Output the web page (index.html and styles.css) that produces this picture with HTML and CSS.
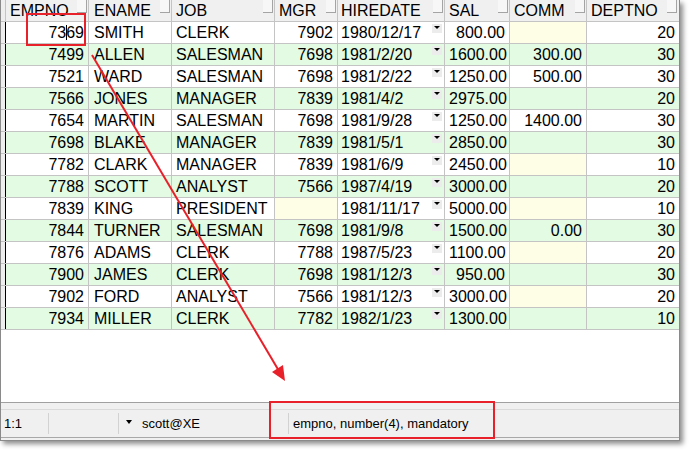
FILE: index.html
```html
<!DOCTYPE html>
<html>
<head>
<meta charset="utf-8">
<link rel="stylesheet" href="styles.css">
</head>
<body>
<div class="page">
  <div class="window">
    <div class="grid">
      <div class="row hdr">
        <div class="cell ind hind"></div>
        <div class="cell c1 hc"><span>EMPNO</span><i class="hb"></i></div>
        <div class="cell c2 hc"><span>ENAME</span><i class="hb"></i></div>
        <div class="cell c3 hc"><span>JOB</span><i class="hb"></i></div>
        <div class="cell c4 hc"><span>MGR</span><i class="hb"></i></div>
        <div class="cell c5 hc"><span>HIREDATE</span><i class="hb"></i></div>
        <div class="cell c6 hc"><span>SAL</span><i class="hb"></i></div>
        <div class="cell c7 hc"><span>COMM</span><i class="hb"></i></div>
        <div class="cell c8 hc"><span>DEPTNO</span><i class="hb"></i></div>
      </div>

      <div class="row">
        <div class="cell ind"></div>
        <div class="cell c1 n">73<span class="caret"></span>69</div>
        <div class="cell c2">SMITH</div>
        <div class="cell c3">CLERK</div>
        <div class="cell c4 n">7902</div>
        <div class="cell c5 dt"><span>1980/12/17</span><i class="dd"></i></div>
        <div class="cell c6 n">800.00</div>
        <div class="cell c7 n nul"></div>
        <div class="cell c8 n">20</div>
      </div>
      <div class="row alt">
        <div class="cell ind"></div>
        <div class="cell c1 n">7499</div>
        <div class="cell c2">ALLEN</div>
        <div class="cell c3">SALESMAN</div>
        <div class="cell c4 n">7698</div>
        <div class="cell c5 dt"><span>1981/2/20</span><i class="dd"></i></div>
        <div class="cell c6 n">1600.00</div>
        <div class="cell c7 n">300.00</div>
        <div class="cell c8 n">30</div>
      </div>
      <div class="row">
        <div class="cell ind"></div>
        <div class="cell c1 n">7521</div>
        <div class="cell c2">WARD</div>
        <div class="cell c3">SALESMAN</div>
        <div class="cell c4 n">7698</div>
        <div class="cell c5 dt"><span>1981/2/22</span><i class="dd"></i></div>
        <div class="cell c6 n">1250.00</div>
        <div class="cell c7 n">500.00</div>
        <div class="cell c8 n">30</div>
      </div>
      <div class="row alt">
        <div class="cell ind"></div>
        <div class="cell c1 n">7566</div>
        <div class="cell c2">JONES</div>
        <div class="cell c3">MANAGER</div>
        <div class="cell c4 n">7839</div>
        <div class="cell c5 dt"><span>1981/4/2</span><i class="dd"></i></div>
        <div class="cell c6 n">2975.00</div>
        <div class="cell c7 n nul"></div>
        <div class="cell c8 n">20</div>
      </div>
      <div class="row">
        <div class="cell ind"></div>
        <div class="cell c1 n">7654</div>
        <div class="cell c2">MARTIN</div>
        <div class="cell c3">SALESMAN</div>
        <div class="cell c4 n">7698</div>
        <div class="cell c5 dt"><span>1981/9/28</span><i class="dd"></i></div>
        <div class="cell c6 n">1250.00</div>
        <div class="cell c7 n">1400.00</div>
        <div class="cell c8 n">30</div>
      </div>
      <div class="row alt">
        <div class="cell ind"></div>
        <div class="cell c1 n">7698</div>
        <div class="cell c2">BLAKE</div>
        <div class="cell c3">MANAGER</div>
        <div class="cell c4 n">7839</div>
        <div class="cell c5 dt"><span>1981/5/1</span><i class="dd"></i></div>
        <div class="cell c6 n">2850.00</div>
        <div class="cell c7 n nul"></div>
        <div class="cell c8 n">30</div>
      </div>
      <div class="row">
        <div class="cell ind"></div>
        <div class="cell c1 n">7782</div>
        <div class="cell c2">CLARK</div>
        <div class="cell c3">MANAGER</div>
        <div class="cell c4 n">7839</div>
        <div class="cell c5 dt"><span>1981/6/9</span><i class="dd"></i></div>
        <div class="cell c6 n">2450.00</div>
        <div class="cell c7 n nul"></div>
        <div class="cell c8 n">10</div>
      </div>
      <div class="row alt">
        <div class="cell ind"></div>
        <div class="cell c1 n">7788</div>
        <div class="cell c2">SCOTT</div>
        <div class="cell c3">ANALYST</div>
        <div class="cell c4 n">7566</div>
        <div class="cell c5 dt"><span>1987/4/19</span><i class="dd"></i></div>
        <div class="cell c6 n">3000.00</div>
        <div class="cell c7 n nul"></div>
        <div class="cell c8 n">20</div>
      </div>
      <div class="row">
        <div class="cell ind"></div>
        <div class="cell c1 n">7839</div>
        <div class="cell c2">KING</div>
        <div class="cell c3">PRESIDENT</div>
        <div class="cell c4 n nul"></div>
        <div class="cell c5 dt"><span>1981/11/17</span><i class="dd"></i></div>
        <div class="cell c6 n">5000.00</div>
        <div class="cell c7 n nul"></div>
        <div class="cell c8 n">10</div>
      </div>
      <div class="row alt">
        <div class="cell ind"></div>
        <div class="cell c1 n">7844</div>
        <div class="cell c2">TURNER</div>
        <div class="cell c3">SALESMAN</div>
        <div class="cell c4 n">7698</div>
        <div class="cell c5 dt"><span>1981/9/8</span><i class="dd"></i></div>
        <div class="cell c6 n">1500.00</div>
        <div class="cell c7 n">0.00</div>
        <div class="cell c8 n">30</div>
      </div>
      <div class="row">
        <div class="cell ind"></div>
        <div class="cell c1 n">7876</div>
        <div class="cell c2">ADAMS</div>
        <div class="cell c3">CLERK</div>
        <div class="cell c4 n">7788</div>
        <div class="cell c5 dt"><span>1987/5/23</span><i class="dd"></i></div>
        <div class="cell c6 n">1100.00</div>
        <div class="cell c7 n nul"></div>
        <div class="cell c8 n">20</div>
      </div>
      <div class="row alt">
        <div class="cell ind"></div>
        <div class="cell c1 n">7900</div>
        <div class="cell c2">JAMES</div>
        <div class="cell c3">CLERK</div>
        <div class="cell c4 n">7698</div>
        <div class="cell c5 dt"><span>1981/12/3</span><i class="dd"></i></div>
        <div class="cell c6 n">950.00</div>
        <div class="cell c7 n nul"></div>
        <div class="cell c8 n">30</div>
      </div>
      <div class="row">
        <div class="cell ind"></div>
        <div class="cell c1 n">7902</div>
        <div class="cell c2">FORD</div>
        <div class="cell c3">ANALYST</div>
        <div class="cell c4 n">7566</div>
        <div class="cell c5 dt"><span>1981/12/3</span><i class="dd"></i></div>
        <div class="cell c6 n">3000.00</div>
        <div class="cell c7 n nul"></div>
        <div class="cell c8 n">20</div>
      </div>
      <div class="row alt">
        <div class="cell ind"></div>
        <div class="cell c1 n">7934</div>
        <div class="cell c2">MILLER</div>
        <div class="cell c3">CLERK</div>
        <div class="cell c4 n">7782</div>
        <div class="cell c5 dt"><span>1982/1/23</span><i class="dd"></i></div>
        <div class="cell c6 n">1300.00</div>
        <div class="cell c7 n nul"></div>
        <div class="cell c8 n">10</div>
      </div>
    </div>
    <div class="status">
      <div class="bar">
        <div class="sp sp1">1:1</div>
        <div class="sp sp2"></div>
        <div class="sp sp3"><i class="tri"></i><span>scott@XE</span></div>
        <div class="sp sp4">empno, number(4), mandatory</div>
      </div>
    </div>
  </div>
  <svg class="annot" width="689" height="450" viewBox="0 0 689 450">
    <rect x="27" y="14" width="58" height="31" fill="none" stroke="#e8202a" stroke-width="2"/>
    <rect x="270" y="402" width="224" height="36" fill="none" stroke="#e8202a" stroke-width="2"/>
    <line x1="92" y1="55" x2="279" y2="371" stroke="#e8202a" stroke-width="2"/>
    <polygon points="285,381 272,372 283,365" fill="#e8202a"/>
  </svg>
</div>
</body>
</html>
```
FILE: styles.css
```css
body {
  margin: 0;
  background: #ffffff;
  font-family: "Liberation Sans", Arial, sans-serif;
  color: #000;
}

.page {
  position: relative;
  width: 689px;
  height: 450px;
}

.window {
  width: 680px;
  height: 441px;
  box-sizing: border-box;
  border-left: 1px solid #8a8a8a;
  border-right: 1px solid #8a8a8a;
  border-bottom: 1px solid #8a8a8a;
  background: #fff;
  display: flex;
  flex-direction: column;
  box-shadow: 3px 3px 5px rgba(0, 0, 0, 0.45);
}

.grid {
  height: 402px;
  flex: none;
  overflow: hidden;
  background: #fff;
}

.row {
  display: flex;
  height: 22px;
  box-sizing: border-box;
  border-bottom: 1px solid #c4c4c4;
  font-size: 16px;
  line-height: 21px;
}

.row.alt {
  background: #e3fbe3;
}

.hdr {
  background: #f0f0f0;
}

.cell {
  box-sizing: border-box;
  flex: none;
  border-right: 1px solid #c4c4c4;
  padding: 0 4px;
  white-space: nowrap;
  overflow: hidden;
}

.ind {
  width: 5px;
  padding: 0;
  background: #eeeeee;
  border-right: 1px solid #000;
}

.hind {
  border-right: 1px solid #c4c4c4;
}

.c1 { width: 83px; }
.c2 { width: 83px; padding-left: 5px; }
.c3 { width: 103px; }
.c4 { width: 63px; }
.c5 { width: 107px; padding-left: 3px; }
.c6 { width: 65px; }
.c7 { width: 77px; }
.c8 { width: 92px; border-right: none; }

.n {
  text-align: right;
}

.nul {
  background: #fefde6;
}

.row.alt .nul {
  background: transparent;
}

.hc {
  display: flex;
  justify-content: space-between;
  align-items: flex-start;
  padding-right: 0;
}

.hb {
  flex: none;
  width: 10px;
  height: 13px;
  box-sizing: border-box;
  border-right: 1px solid #a4a4a4;
  border-bottom: 1px solid #a4a4a4;
  background: #f7f7f7;
  margin-right: 1px;
}

.c8 .hb {
  margin-right: 2px;
}

.caret {
  display: inline-block;
  width: 1px;
  height: 15px;
  background: #000;
  margin-right: -1px;
  vertical-align: -2px;
}

.dt {
  display: flex;
  justify-content: space-between;
  align-items: flex-start;
  padding-right: 2px;
}

.dd {
  flex: none;
  width: 10px;
  height: 9px;
  margin-top: 2px;
  background: #ececec;
  display: flex;
  justify-content: center;
  align-items: flex-start;
}

.dd::after {
  content: "";
  margin-top: 2px;
  border-left: 3px solid transparent;
  border-right: 3px solid transparent;
  border-top: 3px solid #000;
}

.status {
  flex: 1;
  border-top: 1px solid #a0a0a0;
  background: #f0f0f0;
  padding: 6px 0 2px;
  display: flex;
  flex-direction: column;
}

.bar {
  flex: 1;
  display: flex;
  border-top: 1px solid #dadada;
  border-bottom: 1px solid #a8a8a8;
  font-size: 13px;
  line-height: 15px;
  padding: 3px 0;
}

.sp {
  box-sizing: border-box;
  display: flex;
  align-items: center;
  border-right: 1px solid #d2d2d2;
  white-space: nowrap;
}

.sp1 { width: 48px; padding-left: 3px; }
.sp2 { width: 70px; }
.sp3 { width: 170px; padding-left: 7px; }
.sp4 { flex: 1; padding-left: 4px; border-right: none; }

.tri {
  width: 0;
  height: 0;
  border-left: 3.5px solid transparent;
  border-right: 3.5px solid transparent;
  border-top: 4px solid #000;
  margin-right: 10px;
  margin-top: -4px;
}

.annot {
  position: absolute;
  left: 0;
  top: 0;
  pointer-events: none;
}
```
